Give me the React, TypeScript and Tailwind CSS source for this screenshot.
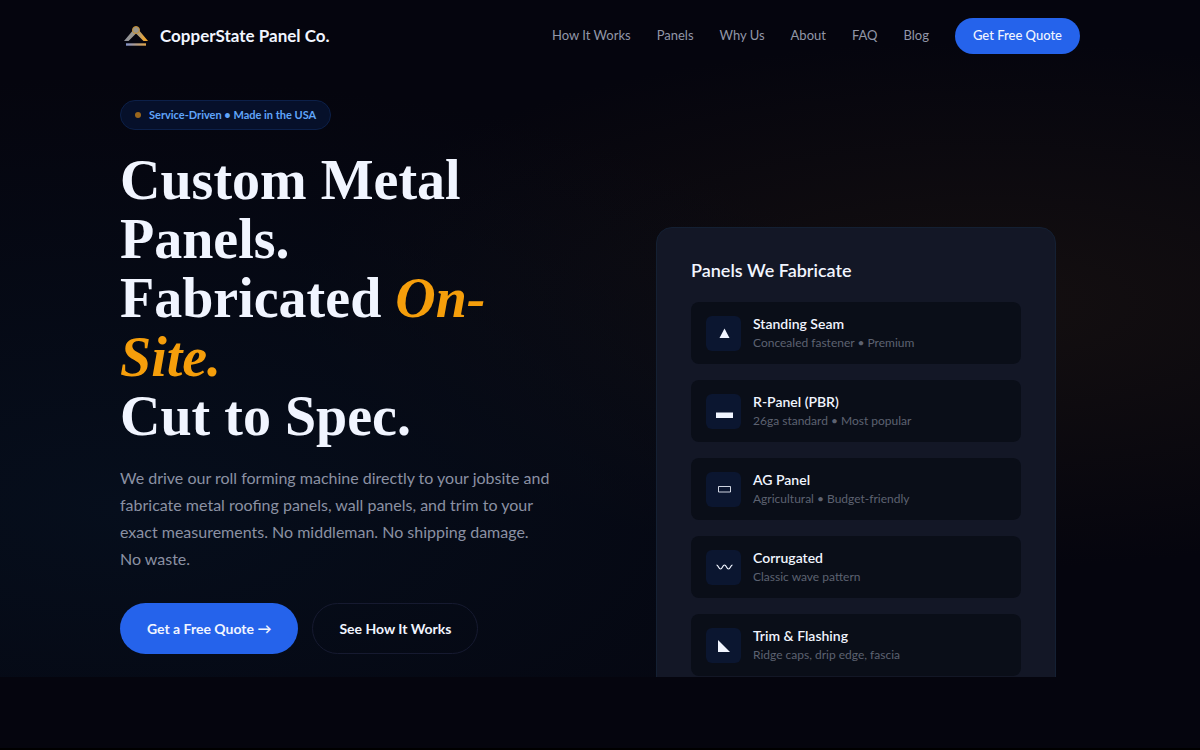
const navLinks = ["How It Works", "Panels", "Why Us", "About", "FAQ", "Blog"];

const panels = [
  { icon: "triangle", name: "Standing Seam", detail: "Concealed fastener • Premium" },
  { icon: "bar", name: "R-Panel (PBR)", detail: "26ga standard • Most popular" },
  { icon: "outline", name: "AG Panel", detail: "Agricultural • Budget-friendly" },
  { icon: "wave", name: "Corrugated", detail: "Classic wave pattern" },
  { icon: "corner", name: "Trim & Flashing", detail: "Ridge caps, drip edge, fascia" },
];

function Logo() {
  return (
    <svg className="h-8 w-8" viewBox="0 0 32 32" fill="none" aria-hidden="true">
      <defs>
        <linearGradient id="roof" x1="5" y1="0" x2="28" y2="0" gradientUnits="userSpaceOnUse">
          <stop stopColor="#8d9098" />
          <stop offset="0.55" stopColor="#a39c8a" />
          <stop offset="0.8" stopColor="#e3a33c" />
          <stop offset="1" stopColor="#f5a623" />
        </linearGradient>
        <linearGradient id="base" x1="6" y1="0" x2="26" y2="0" gradientUnits="userSpaceOnUse">
          <stop stopColor="#8294cb" />
          <stop offset="1" stopColor="#e0a447" />
        </linearGradient>
      </defs>
      <path d="M4 21L14 9H18L28 21H23.5L16 13.5L8.5 21Z" fill="url(#roof)" />
      <circle cx="16" cy="10" r="3.5" fill="#9a968b" stroke="#c98f2c" />
      <path d="M6 24.500H26" stroke="url(#base)" strokeWidth="2.4" />
    </svg>
  );
}

function PanelIcon({ icon }: { icon: string }) {
  return (
    <span className="flex h-[35px] w-[35px] shrink-0 items-center justify-center rounded-md bg-[#0b1630] text-[#f1f5ff]">
      <svg className="h-5 w-5" viewBox="0 0 20 20" fill="none" aria-hidden="true">
        {icon === "triangle" && <path d="M10.5 5.5L15.5 15H5.5Z" fill="currentColor" />}
        {icon === "bar" && <path d="M2 11.5H19V17H2Z" fill="currentColor" />}
        {icon === "outline" && <path d="M4.5 7.5H16.5V13H4.5Z" stroke="currentColor" strokeOpacity="0.85" />}
        {icon === "wave" && (
          <path
            d="M2.5 8C4.5 8 4.5 12 6.5 12S8.5 8 10.5 8S12.5 12 14.5 12S16.5 8 18.5 8"
            stroke="currentColor"
            strokeWidth="1.2"
          />
        )}
        {icon === "corner" && <path d="M4 5V17H16Z" fill="currentColor" />}
      </svg>
    </span>
  );
}

export default function App() {
  return (
    <div className="flex h-screen min-w-0 flex-col bg-[#05050e] font-['Lato',sans-serif] text-[#f1f5ff]">
      <div className="min-h-0 flex-1 overflow-hidden bg-[radial-gradient(ellipse_at_10%_75%,#060e1c_0%,transparent_60%),radial-gradient(ellipse_at_82%_45%,#140f10_0%,transparent_50%)]">
        <header className="mx-auto flex h-[71px] max-w-[960px] items-center justify-between">
          <a href="#top" className="flex items-center gap-2 text-[17px] font-bold">
            <Logo />
            <span>CopperState Panel Co.</span>
          </a>
          <nav className="flex items-center gap-[26px] text-[13px] text-[#9297a8]">
            {navLinks.map((link) => (
              <a key={link} href="#top" className="hover:text-white">
                {link}
              </a>
            ))}
            <button className="h-9 rounded-full bg-[#2563eb] px-[18px] font-medium text-[#f1f5ff]">
              Get Free Quote
            </button>
          </nav>
        </header>

        <main className="mx-auto grid max-w-[960px] grid-cols-2 gap-16 pt-[29px]">
          <section>
            <p className="inline-flex h-[30px] items-center gap-2 rounded-full border border-[#0c2049] bg-[#06102a] px-3.5 text-[11px] font-bold text-[#60a5fa]">
              <span className="h-1.5 w-1.5 rounded-full bg-[#9a661c]" />
              Service-Driven • Made in the USA
            </p>
            <h1 className="mt-[21px] font-['Liberation_Serif',serif] text-[56px] leading-[59px] font-bold">
              Custom Metal Panels.
              <br />
              Fabricated <em className="text-[#f59e0b]">On-</em>
              <em className="text-[#f59e0b]">Site.</em>
              <br />
              Cut to Spec.
            </h1>
            <p className="mt-[18px] max-w-[432px] text-base leading-[27px] text-[#8b91a3]">
              We drive our roll forming machine directly to your jobsite and fabricate metal roofing
              panels, wall panels, and trim to your exact measurements. No middleman. No shipping
              damage. No waste.
            </p>
            <div className="mt-[31px] flex gap-3.5 text-sm font-bold">
              <button className="h-[51px] rounded-full bg-[#2563eb] px-[27px]">Get a Free Quote →</button>
              <button className="h-[51px] rounded-full border border-[#161a30] px-[26px]">See How It Works</button>
            </div>
          </section>

          <aside className="mx-auto mt-[127px] w-[400px] self-start rounded-2xl border border-[#142033] bg-[#131726] px-[34px] py-8">
            <h2 className="text-lg leading-5 font-semibold">Panels We Fabricate</h2>
            <ul className="mt-[22px] flex flex-col gap-4">
              {panels.map((panel) => (
                <li key={panel.name} className="flex h-[62px] items-center gap-3 rounded-lg bg-[#0a0e18] px-[15px]">
                  <PanelIcon icon={panel.icon} />
                  <div>
                    <h3 className="text-sm leading-5 font-semibold">{panel.name}</h3>
                    <p className="text-xs leading-[18px] text-[#5d6271]">{panel.detail}</p>
                  </div>
                </li>
              ))}
            </ul>
          </aside>
        </main>
      </div>
      <div className="h-[73px] shrink-0 border-b-2 border-black" />
    </div>
  );
}
